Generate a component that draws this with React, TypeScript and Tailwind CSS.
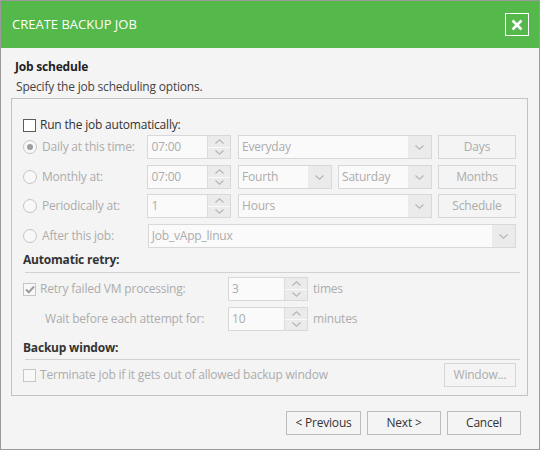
import React from 'react';

const muted = 'text-[#acacac]';

function ChevUp() {
  return (
    <svg width="9" height="5" viewBox="0 0 9 5">
      <polyline points="0.5,4.5 4.5,0.8 8.5,4.5" fill="none" stroke="#b4b4b4" strokeWidth="1.1" />
    </svg>
  );
}

function ChevDown() {
  return (
    <svg width="9" height="5" viewBox="0 0 9 5">
      <polyline points="0.5,0.5 4.5,4.2 8.5,0.5" fill="none" stroke="#b4b4b4" strokeWidth="1.1" />
    </svg>
  );
}

function Spin({ value, w }: { value: string; w: string }) {
  return (
    <div className={`flex h-6 border border-[#d8d8d8] bg-[#fafafa] ${w}`}>
      <div className={`flex-1 pl-[3px] leading-[22px] ${muted}`}>{value}</div>
      <div className="w-[23px] flex flex-col border-l border-[#dcdcdc]">
        <div className="flex-1 bg-[#ebebeb] flex items-center justify-center border-b border-[#fafafa]"><ChevUp /></div>
        <div className="flex-1 bg-[#ebebeb] flex items-center justify-center"><ChevDown /></div>
      </div>
    </div>
  );
}

function Select({ value, w }: { value: string; w: string }) {
  return (
    <div className={`flex h-6 border border-[#d8d8d8] bg-[#fafafa] ${w}`}>
      <div className={`flex-1 pl-[3px] leading-[22px] ${muted}`}>{value}</div>
      <div className="w-[23px] bg-[#ebebeb] flex items-center justify-center"><ChevDown /></div>
    </div>
  );
}

function Btn({ label, w }: { label: string; w: string }) {
  return (
    <div className={`h-6 border border-[#d6d6d6] flex items-center justify-center ${muted} ${w}`}>{label}</div>
  );
}

function Radio({ on, label }: { on?: boolean; label: string }) {
  return (
    <div className="w-[125px] flex items-center gap-[5px]">
      <span className="w-[14px] h-[14px] rounded-full border border-[#c6c6c6] bg-[#f8f8f8] flex items-center justify-center">
        {on && <span className="w-[6px] h-[6px] rounded-full bg-[#9e9e9e]" />}
      </span>
      <span className={muted}>{label}</span>
    </div>
  );
}

function Heading({ text }: { text: string }) {
  return <div className="h-4 leading-4 font-bold text-[#333]">{text}</div>;
}

function Rule() {
  return <div className="h-px bg-[#d2d2d2] ml-[2px] mr-[-4px]" />;
}

export default function App() {
  return (
    <div className="w-[540px] h-[450px] border border-[#9a9a9a] bg-[#f4f4f4] flex flex-col text-[12px] tracking-[-0.2px] font-['Open_Sans','Liberation_Sans',sans-serif]">
      <div className="h-[47px] bg-[#55b84a] flex items-center justify-between pl-[11px] pr-[10px]">
        <span className="text-white text-[13px] tracking-[0px]">CREATE BACKUP JOB</span>
        <span className="w-6 h-[23px] border border-white flex items-center justify-center">
          <svg width="12" height="12" viewBox="0 0 12 12">
            <path d="M1.5 1.5 L10.5 10.5 M10.5 1.5 L1.5 10.5" stroke="#fff" strokeWidth="2.6" />
          </svg>
        </span>
      </div>

      <div className="flex-1 flex flex-col pl-[10px] pr-[11px]">
        <div className="mt-[11px] ml-[4px] h-4 leading-4 font-bold text-[#222]">Job schedule</div>
        <div className="mt-[4px] ml-[5px] h-4 leading-4 text-[#444]">Specify the job scheduling options.</div>

        <div className="mt-[3px] border border-[#c2c2c2] px-[11px] pt-[16px] pb-[8px] flex flex-col">
          <div className="h-5 flex items-center gap-[4px]">
            <span className="w-[13px] h-[13px] border border-[#5c5c5c] bg-white" />
            <span className="text-[#333]">Run the job automatically:</span>
          </div>

          <div className="flex items-center">
            <Radio on label="Daily at this time:" />
            <Spin value="07:00" w="w-[84px]" />
            <div className="ml-[7px]"><Select value="Everyday" w="w-[194px]" /></div>
            <div className="ml-[6px]"><Btn label="Days" w="w-[78px]" /></div>
          </div>
          <div className="mt-[6px] flex items-center">
            <Radio label="Monthly at:" />
            <Spin value="07:00" w="w-[84px]" />
            <div className="ml-[7px]"><Select value="Fourth" w="w-[94px]" /></div>
            <div className="ml-[6px]"><Select value="Saturday" w="w-[94px]" /></div>
            <div className="ml-[6px]"><Btn label="Months" w="w-[78px]" /></div>
          </div>
          <div className="mt-[5px] flex items-center">
            <Radio label="Periodically at:" />
            <Spin value="1" w="w-[84px]" />
            <div className="ml-[7px]"><Select value="Hours" w="w-[194px]" /></div>
            <div className="ml-[6px]"><Btn label="Schedule" w="w-[78px]" /></div>
          </div>
          <div className="mt-[6px] flex items-center">
            <Radio label="After this job:" />
            <Select value="Job_vApp_linux" w="w-[369px]" />
          </div>

          <div className="mt-[4px]"><Heading text="Automatic retry:" /></div>
          <div className="mt-[4px]"><Rule /></div>

          <div className="mt-[4px] flex items-center">
            <div className="w-[205px] flex items-center gap-[4px]">
              <span className="w-[13px] h-[13px] border border-[#c6c6c6] bg-[#f8f8f8] flex items-center justify-center">
                <svg width="10" height="9" viewBox="0 0 10 9">
                  <path d="M1 4.5 L3.8 7.3 L9 1.5" fill="none" stroke="#9c9c9c" strokeWidth="2" />
                </svg>
              </span>
              <span className={muted}>Retry failed VM processing:</span>
            </div>
            <Spin value="3" w="w-[80px]" />
            <span className={`ml-[5px] ${muted}`}>times</span>
          </div>
          <div className="mt-[6px] flex items-center">
            <div className={`w-[205px] pl-[22px] ${muted}`}>Wait before each attempt for:</div>
            <Spin value="10" w="w-[80px]" />
            <span className={`ml-[5px] ${muted}`}>minutes</span>
          </div>

          <div className="mt-[9px]"><Heading text="Backup window:" /></div>
          <div className="mt-[3px]"><Rule /></div>
          <div className="mt-[3px] flex items-center justify-between">
            <div className="flex items-center gap-[4px]">
              <span className="w-[13px] h-[13px] border border-[#c6c6c6] bg-[#f8f8f8]" />
              <span className={muted}>Terminate job if it gets out of allowed backup window</span>
            </div>
            <Btn label="Window..." w="w-[72px]" />
          </div>
        </div>

        <div className="mt-[15px] mr-[7px] flex justify-end gap-[6px] text-[#333]">
          <div className="w-[75px] h-6 border border-[#bcbcbc] flex items-center justify-center">&lt; Previous</div>
          <div className="w-[74px] h-6 border border-[#bcbcbc] flex items-center justify-center">Next &gt;</div>
          <div className="w-[74px] h-6 border border-[#bcbcbc] flex items-center justify-center">Cancel</div>
        </div>
      </div>
    </div>
  );
}
